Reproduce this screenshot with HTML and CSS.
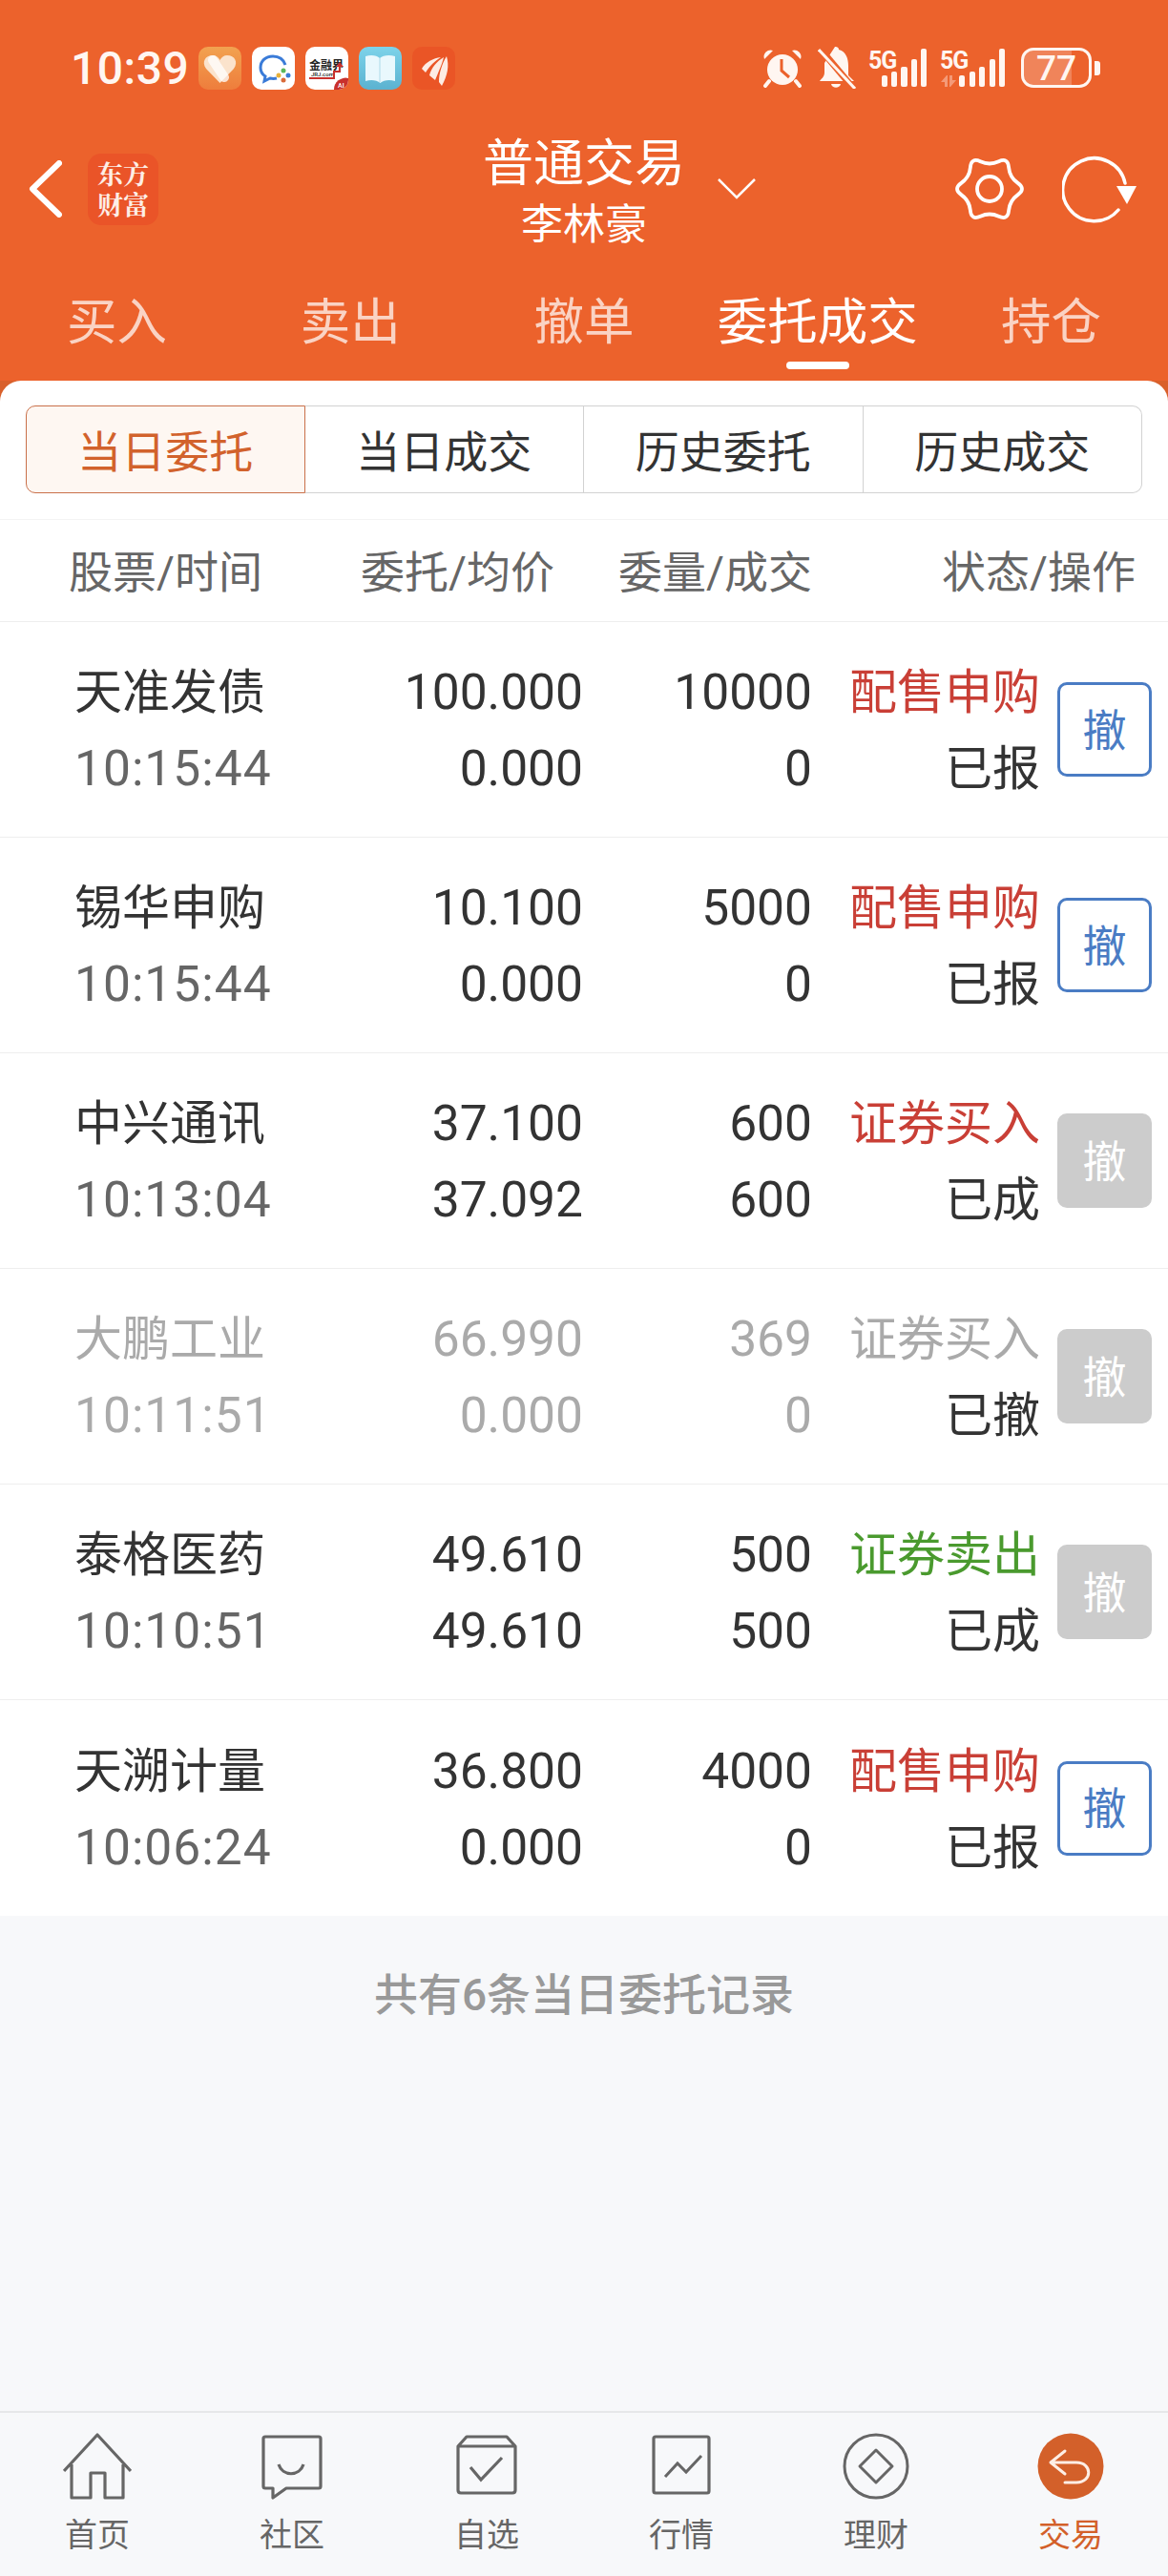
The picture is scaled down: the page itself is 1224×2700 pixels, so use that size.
FILE: index.html
```html
<!DOCTYPE html>
<html lang="zh-CN">
<head>
<meta charset="utf-8">
<title>普通交易</title>
<link rel="stylesheet" href="styles.css">
</head>
<body>
<div class="screen">
  <header class="top">
    <div class="status">
      <span class="clock">10:39</span>
      <div class="notifs">
        <svg class="app" viewBox="0 0 45 45"><defs><linearGradient id="hg" x1="0" y1="0" x2="0" y2="1"><stop offset="0" stop-color="#f2a250"/><stop offset="1" stop-color="#ee7d3c"/></linearGradient></defs><rect width="45" height="45" rx="10" fill="url(#hg)"/><path d="M22.5 38 L8 23 C3 16 7 9 15 9 C18.500 9 21 11 22.500 14 C24 11 26.500 9 30 9 C38 9 42 16 37 23 Z" fill="#fbe3cc"/><path d="M15 14 L27 32" stroke="#fff" stroke-width="10" stroke-linecap="round" opacity=".75"/></svg>
        <svg class="app" viewBox="0 0 45 45"><rect width="45" height="45" rx="10" fill="#fff"/><path d="M35 19 C33 13 28 10 22 10 C14 10 9 15 9 22 C9 26 11 29 14 31 L13 36 L19 33 C21 33.500 24 33.500 26 33" fill="none" stroke="#3a7bd8" stroke-width="3"/><circle cx="33" cy="25" r="2.500" fill="#5cb85c"/><circle cx="38" cy="30" r="2.500" fill="#3a7bd8"/><circle cx="33" cy="35" r="2.500" fill="#d96b3a"/><circle cx="28" cy="30" r="2.500" fill="#e8b13a"/></svg>
        <svg class="app" viewBox="0 0 45 45"><rect width="45" height="45" rx="10" fill="#fff"/><text class="jrj" x="4" y="24">金融界</text><text class="jrj-sub" x="6" y="31">JRJ.com</text><path d="M4 33 H30 V26 H36 V20" fill="none" stroke="#c9302c" stroke-width="2"/><path d="M32 21 L36 16 L40 21 Z" fill="#c9302c"/><path d="M45 33 V35 A10 10 0 0 1 35 45 H30 A12 12 0 0 1 45 33 Z" fill="#c9302c"/><text class="jrj-ai" x="34" y="43">AI</text></svg>
        <svg class="app" viewBox="0 0 45 45"><defs><linearGradient id="bg" x1="0" y1="0" x2="0" y2="1"><stop offset="0" stop-color="#7dd3ea"/><stop offset="1" stop-color="#5bb2d0"/></linearGradient></defs><rect width="45" height="45" rx="10" fill="url(#bg)"/><path d="M7 10 C13 8 19 9 22 12 C25 9 32 8 38 10 V36 C32 34 26 35 22.500 38 C19 35 13 34 7 36 Z" fill="#e9f8fd"/><path d="M22 12 V37" stroke="#bfe4ef" stroke-width="1.500"/></svg>
        <svg class="app" viewBox="0 0 45 45"><rect width="45" height="45" rx="10" fill="#ea5526"/><path d="M10 23 C14 16 22 12 30 11 C24 15 19 19 14 27 Z M18 30 C20 22 26 15 33 11 C31 19 28 25 24 35 Z M28 37 C28 28 31 18 36 10 C39 20 37 30 31 41 Z" fill="#fdece4"/></svg>
      </div>
      <div class="indicators">
        <svg class="alarm" viewBox="0 0 42 42"><circle cx="21" cy="23" r="16" fill="#fff6f1"/><path d="M2 12 A7 7 0 0 1 11 3 Z M40 12 A7 7 0 0 0 31 3 Z" fill="#fff6f1"/><path d="M7 35 L3 40 M35 35 L39 40" stroke="#fff6f1" stroke-width="4" stroke-linecap="round"/><path d="M20 12 V24 L28 31" fill="none" stroke="#ec622c" stroke-width="3"/></svg>
        <svg class="bell" viewBox="0 0 40 44"><path d="M18 0 C19 0 22 0 22 3 C30 5 32 13 32 20 V30 L38 36 H2 C3 34 7 32 7 27 V17 Z" fill="#fff6f1"/><path d="M14 39 H24 C23 44 15 44 14 39 Z" fill="#fff6f1"/><path d="M5 5 L36 42" stroke="#ec622c" stroke-width="7"/><path d="M1 3 L39 44" stroke="#fff6f1" stroke-width="3"/></svg>
        <svg class="signal" viewBox="0 0 62 42"><text class="net" x="0" y="22">5G</text><rect x="14" y="29" width="6" height="12" rx="2"/><rect x="24" y="25" width="6" height="16" rx="2"/><rect x="34" y="20" width="7" height="21" rx="2"/><rect x="45" y="12" width="6" height="29" rx="2"/><rect x="55" y="1" width="6" height="40" rx="2"/></svg>
        <svg class="signal-b" viewBox="0 0 68 42"><text class="net" x="0" y="22">5G</text><path d="M7 29 L1 36 H5 V41 H8 V29 Z M11 41 L17 34 H13 V29 H10 V41 Z" fill="#f49a78"/><rect x="20" y="29" width="6" height="12" rx="2"/><rect x="31" y="25" width="6" height="16" rx="2"/><rect x="41" y="20" width="6" height="21" rx="2"/><rect x="52" y="12" width="6" height="29" rx="2"/><rect x="62" y="1" width="6" height="40" rx="2"/></svg>
        <div class="battery">
          <div class="cell"><span class="level"></span><span class="pct">77</span></div>
          <span class="nub"></span>
        </div>
      </div>
    </div>
    <div class="appbar">
      <div class="bar-left">
        <svg class="back" viewBox="0 0 35 60"><path d="M32 3 L4 30 L32 57" fill="none" stroke="#fff" stroke-width="6" stroke-linecap="round" stroke-linejoin="round"/></svg>
        <div class="logo"><span>东方</span><span>财富</span></div>
      </div>
      <div class="title">
        <span class="title-main">普通交易</span>
        <span class="title-sub">李林豪</span>
      </div>
      <div class="bar-right">
        <svg class="caret" viewBox="0 0 40 22"><path d="M1 1 L20 20 L39 1" fill="none" stroke="#fff" stroke-width="2.500"/></svg>
        <svg class="gear" viewBox="-38 -36 76 72"><path d="M29.670 -6.080 Q21.040 -12.150 20.100 -22.660 Q19.150 -33.170 9.580 -28.740 Q0 -24.300 -9.580 -28.740 Q-19.150 -33.170 -20.100 -22.660 Q-21.040 -12.150 -29.670 -6.080 Q-38.300 0 -29.670 6.080 Q-21.040 12.150 -20.100 22.660 Q-19.150 33.170 -9.580 28.740 Q0 24.300 9.580 28.740 Q19.150 33.170 20.100 22.660 Q21.040 12.150 29.670 6.080 Q38.300 0 29.670 -6.080 Z" fill="none" stroke="#fff" stroke-width="3.800"/><circle r="13" fill="none" stroke="#fff" stroke-width="3.800"/></svg>
        <svg class="refresh" viewBox="0 0 78 72"><path d="M59 58 A33 33 0 1 1 66 30" fill="none" stroke="#fff" stroke-width="3.500" stroke-linecap="round"/><path d="M57 33 H78 L68 52 Z" fill="#fff"/></svg>
      </div>
    </div>
    <nav class="tabs">
      <span class="tab">买入</span>
      <span class="tab">卖出</span>
      <span class="tab">撤单</span>
      <span class="tab tab-on">委托成交</span>
      <span class="tab">持仓</span>
    </nav>
  </header>

  <main class="backing">
    <div class="sheet">
      <div class="filters">
        <span class="filter filter-on">当日委托</span>
        <span class="filter">当日成交</span>
        <span class="filter">历史委托</span>
        <span class="filter">历史成交</span>
      </div>
      <div class="cols">
        <span>股票/时间</span>
        <span class="end">委托/均价</span>
        <span class="end">委量/成交</span>
        <span class="end">状态/操作</span>
      </div>

      <div class="row">
        <div class="cells">
          <span class="name">天准发债</span><span class="num">100.000</span><span class="num">10000</span><span class="kind buy">配售申购</span>
          <span class="time">10:15:44</span><span class="num">0.000</span><span class="num">0</span><span class="state">已报</span>
        </div>
        <button class="cancel">撤</button>
      </div>
      <div class="row">
        <div class="cells">
          <span class="name">锡华申购</span><span class="num">10.100</span><span class="num">5000</span><span class="kind buy">配售申购</span>
          <span class="time">10:15:44</span><span class="num">0.000</span><span class="num">0</span><span class="state">已报</span>
        </div>
        <button class="cancel">撤</button>
      </div>
      <div class="row">
        <div class="cells">
          <span class="name">中兴通讯</span><span class="num">37.100</span><span class="num">600</span><span class="kind buy">证券买入</span>
          <span class="time">10:13:04</span><span class="num">37.092</span><span class="num">600</span><span class="state">已成</span>
        </div>
        <button class="cancel cancel-off">撤</button>
      </div>
      <div class="row row-dead">
        <div class="cells">
          <span class="name">大鹏工业</span><span class="num">66.990</span><span class="num">369</span><span class="kind">证券买入</span>
          <span class="time">10:11:51</span><span class="num">0.000</span><span class="num">0</span><span class="state">已撤</span>
        </div>
        <button class="cancel cancel-off">撤</button>
      </div>
      <div class="row">
        <div class="cells">
          <span class="name">泰格医药</span><span class="num">49.610</span><span class="num">500</span><span class="kind sell">证券卖出</span>
          <span class="time">10:10:51</span><span class="num">49.610</span><span class="num">500</span><span class="state">已成</span>
        </div>
        <button class="cancel cancel-off">撤</button>
      </div>
      <div class="row">
        <div class="cells">
          <span class="name">天溯计量</span><span class="num">36.800</span><span class="num">4000</span><span class="kind buy">配售申购</span>
          <span class="time">10:06:24</span><span class="num">0.000</span><span class="num">0</span><span class="state">已报</span>
        </div>
        <button class="cancel">撤</button>
      </div>

      <div class="rest">
        <p class="total">共有6条当日委托记录</p>
      </div>
    </div>
  </main>

  <footer class="dock">
    <div class="dock-item">
      <svg class="dock-icon" viewBox="0 0 72 70"><path d="M1 40 L36 2 L71 40 M9 33 V68 H29 V42 H44 V68 H63 V33" fill="none" stroke="#666" stroke-width="3.200" stroke-linejoin="round"/></svg>
      <span>首页</span>
    </div>
    <div class="dock-item">
      <svg class="dock-icon" viewBox="0 0 72 70"><path d="M8 4 H64 Q66 4 66 6 V56 Q66 58 64 58 H30 L16 68 V58 H8 Q6 58 6 56 V6 Q6 4 8 4 Z" fill="none" stroke="#666" stroke-width="3.200" stroke-linejoin="round"/><path d="M22 33 C26 46 44 46 48 33" fill="none" stroke="#666" stroke-width="3.200"/></svg>
      <span>社区</span>
    </div>
    <div class="dock-item">
      <svg class="dock-icon" viewBox="0 0 72 70"><path d="M15 4 H57 L66 14 V60 Q66 63 63 63 H9 Q6 63 6 60 V14 Z M6 14 H66" fill="none" stroke="#666" stroke-width="3.200" stroke-linejoin="round"/><path d="M19 36 L30 49 L52 26" fill="none" stroke="#666" stroke-width="3.200"/></svg>
      <span>自选</span>
    </div>
    <div class="dock-item">
      <svg class="dock-icon" viewBox="0 0 72 70"><rect x="7" y="4" width="58" height="59" rx="2" fill="none" stroke="#666" stroke-width="3.200"/><path d="M19 46 L32 32 L41 41 L57 24" fill="none" stroke="#666" stroke-width="3"/></svg>
      <span>行情</span>
    </div>
    <div class="dock-item">
      <svg class="dock-icon" viewBox="0 0 72 70"><circle cx="36" cy="35" r="33" fill="none" stroke="#666" stroke-width="3"/><path d="M36 18 L53 35 L36 52 L19 35 Z" fill="none" stroke="#666" stroke-width="3" stroke-linejoin="round"/></svg>
      <span>理财</span>
    </div>
    <div class="dock-item dock-on">
      <svg class="dock-icon" viewBox="0 0 72 70"><circle cx="36" cy="35" r="34.500" fill="#d3602a"/><path d="M30 19 L15 31 L30 43 M15 31 H42 C59 31 59 52 42 52 H30" fill="none" stroke="#fdeee5" stroke-width="3" stroke-linecap="round" stroke-linejoin="round"/></svg>
      <span>交易</span>
    </div>
  </footer>
</div>
</body>
</html>
```

FILE: styles.css
```css
* { box-sizing: border-box; }

html, body { margin: 0; padding: 0; }

body {
  font-family: Roboto, "Noto Sans CJK SC", sans-serif;
  color: #333;
  background: #f7f8fa;
}

.screen {
  width: 1224px;
  height: 2700px;
  display: flex;
  flex-direction: column;
}

/* Orange header */
.top { background: #ec622c; color: #fff; height: 399px; flex: none; }

.status {
  height: 142px;
  padding: 0 71px 0 74px;
  display: flex;
  align-items: center;
}

.clock { font-size: 48px; font-weight: 500; width: 134px; color: #fff6f1; letter-spacing: .5px; }

.notifs { display: flex; gap: 11px; }
.app { width: 45px; height: 45px; display: block; }

.jrj { font: 700 12px "Noto Sans CJK SC", sans-serif; fill: #222; }
.jrj-sub { font: 500 6px Roboto, sans-serif; fill: #222; }
.jrj-ai { font: 500 7px Roboto, sans-serif; fill: #fff; }

.indicators { margin-left: auto; display: flex; align-items: center; }
.indicators svg { display: block; fill: #fff6f1; }
.alarm { width: 42px; height: 42px; margin-right: 16px; }
.bell { width: 40px; height: 44px; margin-right: 13px; }
.signal { width: 62px; height: 42px; margin-right: 13px; }
.signal-b { width: 68px; height: 42px; margin-right: 17px; }
.net { font: 700 25px "Liberation Sans Narrow", Roboto, sans-serif; letter-spacing: -1px; }

.battery { display: flex; align-items: center; gap: 3px; }
.cell {
  position: relative;
  width: 74px;
  height: 42px;
  border: 3.5px solid #fff6f1;
  border-radius: 13px;
  overflow: hidden;
  display: flex;
  align-items: center;
  justify-content: center;
}
.level { position: absolute; left: 0; top: 0; bottom: 0; width: 50px; background: rgba(255, 255, 255, .22); }
.pct { position: relative; font-size: 37px; font-weight: 500; line-height: 1; color: #fff6f1; }
.nub { width: 6px; height: 15px; background: #fff6f1; border-radius: 0 3px 3px 0; }

.appbar {
  height: 112px;
  display: grid;
  grid-template-columns: 1fr 206px 1fr;
  grid-template-rows: 112px;
  align-items: center;
}

.bar-left { display: flex; align-items: center; padding-left: 30px; gap: 27px; }
.back { width: 35px; height: 60px; display: block; }

.logo {
  width: 74px;
  height: 75px;
  background: #ea5428;
  border-radius: 14px;
  display: flex;
  flex-direction: column;
  align-items: center;
  justify-content: center;
  font-family: "Noto Serif CJK SC", "Noto Sans CJK SC", sans-serif;
  font-size: 27px;
  font-weight: 700;
  line-height: 32px;
  color: #fdeee6;
}

.title { display: flex; flex-direction: column; align-items: center; margin-top: 5px; }
.title-main { font-size: 53px; line-height: 64px; white-space: nowrap; }
.title-sub { font-size: 44px; line-height: 50px; white-space: nowrap; margin-top: 7px; }

.bar-right { display: flex; align-items: center; padding: 0 33px 0 37px; }
.caret { width: 40px; height: 22px; margin-right: auto; }
.gear { width: 76px; height: 72px; margin-right: 38px; }
.refresh { width: 78px; height: 72px; }

.tabs { display: grid; grid-template-columns: repeat(5, 1fr); height: 145px; }

.tab {
  position: relative;
  font-size: 52.5px;
  line-height: 60px;
  padding-top: 54px;
  text-align: center;
  color: rgba(255, 255, 255, .72);
}
.tab-on { color: #fff; }
.tab-on::after {
  content: "";
  position: absolute;
  left: 50%;
  margin-left: -33px;
  top: 125px;
  width: 66px;
  height: 8px;
  border-radius: 4px;
  background: #fff;
}

/* Sheet */
.backing { flex: 1; background: #d9602b; min-height: 0; }

.sheet {
  height: 100%;
  background: #fff;
  border-radius: 22px 22px 0 0;
  display: flex;
  flex-direction: column;
  padding-top: 26px;
}

.filters {
  display: grid;
  grid-template-columns: repeat(4, 1fr);
  margin: 0 27px 27px;
  height: 92px;
  flex: none;
}

.filter {
  display: flex;
  align-items: center;
  justify-content: center;
  font-size: 46px;
  padding-bottom: 3px;
  border: 1.5px solid #d2d2d2;
  border-left-width: 0;
}
.filter:last-child { border-radius: 0 10px 10px 0; }

.filter-on {
  color: #d2622c;
  background: #fef7f2;
  border: 1.5px solid #c9704a;
  border-radius: 10px 0 0 10px;
}

.cols {
  height: 108px;
  flex: none;
  display: grid;
  grid-template-columns: 1fr 200px 273px 339px;
  align-items: center;
  padding: 0 34px 4px 72px;
  font-size: 46px;
  color: #666;
  border-top: 1px solid #f3f3f3;
  border-bottom: 1px solid #eee;
}
.end { text-align: right; white-space: nowrap; }

.row {
  height: 226px;
  flex: none;
  display: flex;
  align-items: center;
  padding: 0 17px 0 78px;
  border-bottom: 1px solid #eee;
  background: #fff;
}
.row:nth-last-child(2) { border-bottom: 0; }

.cells {
  flex: 1;
  display: grid;
  grid-template-columns: 1fr 190px 240px 239px;
  grid-auto-rows: 80px;
  align-items: center;
  font-size: 50px;
  margin-right: 18px;
  margin-top: -1px;
}

/* The Chinese and Latin faces sit at different heights in the line */
.name, .kind, .state { margin-bottom: 6px; }
.num, .time { font-size: 51.5px; margin-top: 3px; }

.time { color: #666; letter-spacing: 1px; }
.num { text-align: right; }
.kind, .state { text-align: right; }
.buy { color: #c93f36; }
.sell { color: #4a9a2e; }

.row-dead .name, .row-dead .time, .row-dead .num, .row-dead .kind { color: #aaa; }

.cancel {
  width: 99px;
  height: 99px;
  padding: 0 0 6px;
  font: 46px "Noto Sans CJK SC", sans-serif;
  color: #4a7cc4;
  background: #fff;
  border: 3px solid #4a7cc4;
  border-radius: 10px;
}
.cancel-off { color: #fff; background: #ccc; border-color: #ccc; }

.rest { flex: 1; background: #f7f8fa; padding-top: 50px; }

.total {
  margin: 0;
  text-align: center;
  font-size: 46px;
  line-height: 66px;
  font-weight: 500;
  color: #999;
}

/* Bottom navigation */
.dock {
  height: 173px;
  flex: none;
  background: #f7f8fa;
  border-top: 2px solid #e6e7e9;
  display: grid;
  grid-template-columns: repeat(6, 1fr);
}

.dock-item {
  display: flex;
  flex-direction: column;
  align-items: center;
  padding-top: 21px;
  font-size: 34px;
  line-height: 48px;
  color: #666;
}
.dock-icon { width: 72px; height: 70px; display: block; margin-bottom: 13px; }
.dock-on { color: #d3602a; }
```
